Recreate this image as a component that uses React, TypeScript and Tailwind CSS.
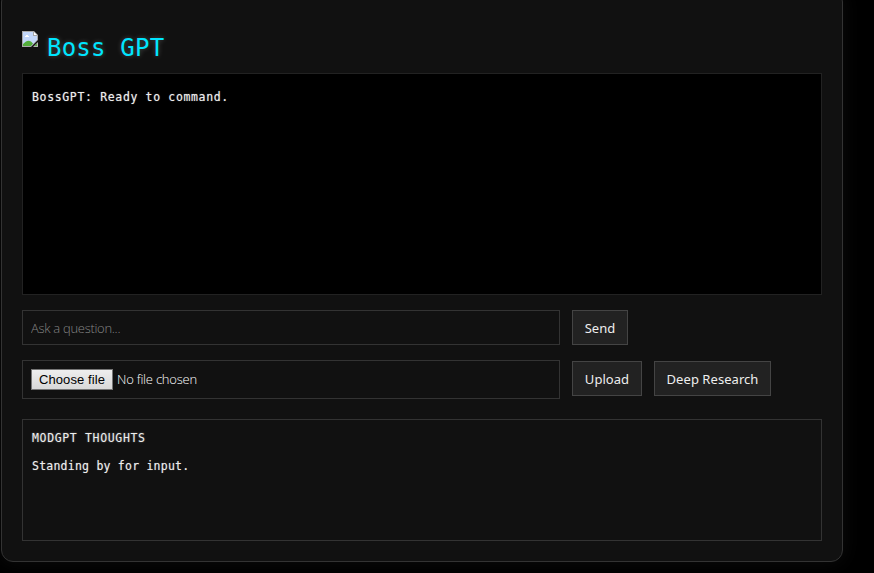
import React from "react";

function BrokenImage() {
  return (
    <svg width="16" height="16" viewBox="0 0 16 16" className="mt-[31px] shrink-0">
      <path d="M0 0h12l4 4v5L9 16H0z" fill="#a9a9a9" />
      <path d="M1 1h10v4h4v4l-6 6H1z" fill="#c4d8fa" />
      <path d="M12 1v3h3z" fill="#fff" />
      <path d="M3 6V5h1V4h2v1h1v1z" fill="#fff" />
      <path d="M1 15v-2l3-2.5q2.5-1.5 5 0l2 2L9 15z" fill="#54ae3c" />
      <path d="M16 11v5h-5z" fill="#b5b5b5" />
      <path d="M15 12.5V15h-2.5z" fill="#54ae3c" />
    </svg>
  );
}

function ActionButton({ children, className }: { children: React.ReactNode; className: string }) {
  return (
    <button className={`h-[35px] shrink-0 border border-[#444] bg-[#222] pt-[2px] text-[13px] text-[#eee] ${className}`}>
      {children}
    </button>
  );
}

export default function App() {
  return (
    <div className="h-[573px] overflow-hidden bg-black pl-px font-['Noto_Sans',sans-serif]">
      <main className="-mt-[10px] h-[572px] w-[842px] rounded-[12px] border border-[#333] bg-[#111] px-5 pt-[9px] shadow-[0_0_20px_rgba(255,255,255,0.05)]">
        <header className="flex h-[73px] items-start">
          <BrokenImage />
          <h1 className="ml-[9px] mt-[32px] whitespace-pre font-['DejaVu_Sans_Mono',monospace] text-[24px] leading-[32px] tracking-[0.22px] text-[#00e5ff] [text-shadow:0_0_5px_rgba(255,255,255,0.25)]">Boss GPT</h1>
        </header>
        <section className="h-[222px] w-[800px] border border-[#222] bg-black px-[9px] pt-[14px] font-['DejaVu_Sans_Mono',monospace] text-[11.5px] leading-[18px] tracking-[0.65px] text-[#eee] [text-shadow:0_0_1px_rgba(255,255,255,0.5)]">
          BossGPT: Ready to command.
        </section>
        <div className="mt-[15px] flex gap-3">
          <input
            className="h-[35px] w-[538px] border border-[#333] bg-transparent px-2 pt-px font-['Open_Sans',sans-serif] text-[13px] font-light tracking-[-0.3px] text-[#eee] outline-none placeholder:text-[#858585]"
            placeholder="Ask a question..."
          />
          <ActionButton className="w-14 tracking-[0.05px]">Send</ActionButton>
        </div>
        <div className="mt-[15px] flex gap-3">
          <div className="flex h-[39px] w-[538px] items-center border border-[#333] px-2 text-[13px]">
            <button className="h-[21px] w-[82px] shrink-0 border border-[#767676] bg-linear-to-b from-[#eee] to-[#d8d8d8] font-['Liberation_Sans',sans-serif] text-[13px] leading-[18px] tracking-[0.1px] text-black">Choose file</button>
            <span className="ml-[4px] font-['Open_Sans',sans-serif] font-light tracking-[-0.22px] text-white">No file chosen</span>
          </div>
          <ActionButton className="mt-px w-[70px] tracking-[0.05px]">Upload</ActionButton>
          <ActionButton className="mt-px w-[117px] tracking-[0.05px]">Deep Research</ActionButton>
        </div>
        <section className="mt-5 h-[122px] w-[800px] border border-[#333] px-[9px] pt-[9px] font-['DejaVu_Sans_Mono',monospace] text-[11.5px] text-[#eee]">
          <h2 className="leading-[18px] tracking-[0.65px] [text-shadow:0_0_2px_rgba(255,255,255,0.4)]">MODGPT THOUGHTS</h2>
          <p className="mt-[10px] leading-[18px] tracking-[0.23px] [text-shadow:0_0_1px_rgba(255,255,255,0.4)]">Standing by for input.</p>
        </section>
      </main>
    </div>
  );
}
